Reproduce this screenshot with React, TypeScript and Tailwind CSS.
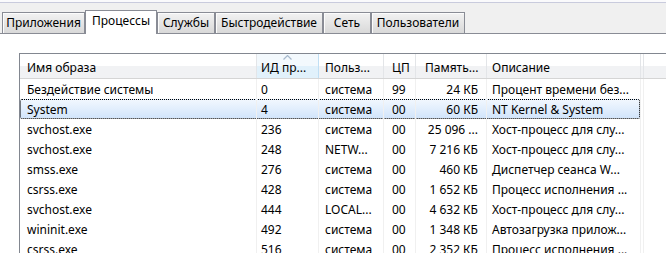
const tabs = [
  { label: "Приложения", w: "w-[83px]" },
  { label: "Процессы", w: "w-[72px]", active: true },
  { label: "Службы", w: "w-[58px]" },
  { label: "Быстродействие", w: "w-[108px]" },
  { label: "Сеть", w: "w-[48px]" },
  { label: "Пользователи", w: "w-[94px]" },
];

const rows = [
  ["Бездействие системы", "0", "система", "99", "24 КБ", "Процент времени без..."],
  ["System", "4", "система", "00", "60 КБ", "NT Kernel & System"],
  ["svchost.exe", "236", "система", "00", "25 096 ...", "Хост-процесс для слу..."],
  ["svchost.exe", "248", "NETW...", "00", "7 216 КБ", "Хост-процесс для слу..."],
  ["smss.exe", "276", "система", "00", "460 КБ", "Диспетчер сеанса  W..."],
  ["csrss.exe", "428", "система", "00", "1 652 КБ", "Процесс исполнения ..."],
  ["svchost.exe", "444", "LOCAL...", "00", "4 632 КБ", "Хост-процесс для слу..."],
  ["wininit.exe", "492", "система", "00", "1 348 КБ", "Автозагрузка прилож..."],
  ["csrss.exe", "516", "система", "00", "2 352 КБ", "Процесс исполнения ..."],
];

const cols = [
  { title: "Имя образа", w: "w-[237px]", pl: "pl-[7px]" },
  { title: "ИД пр...", w: "w-[62px]", pl: "pl-[4px]", sorted: true },
  { title: "Польз...", w: "w-[65px]", pl: "pl-[6px]" },
  { title: "ЦП", w: "w-[32px]", pl: "pl-[8px]" },
  { title: "Память...", w: "w-[71px]", pl: "pl-[9px]", right: true },
  { title: "Описание", w: "w-[154px]", pl: "pl-[5px]" },
];

export default function App() {
  return (
    <div className="w-[666px] h-[253px] overflow-hidden bg-white text-[12px] leading-none text-black font-['Noto_Sans',sans-serif]">
      <div className="h-[2px] bg-[#fafafc]" />
      <div className="h-px bg-[#c9cbdd]" />
      <div className="h-[31px] bg-[#f0f0f0] border-b border-[#898c95] flex items-end pl-[2px]">
        {tabs.map((t) =>
          t.active ? (
            <div
              key={t.label}
              className={`${t.w} h-[24px] -mb-px bg-white border border-b-0 border-[#898c95] flex justify-center pt-[4px] relative z-10`}
            >
              {t.label}
            </div>
          ) : (
            <div
              key={t.label}
              className={`${t.w} h-[21px] bg-gradient-to-b from-[#f2f2f2] to-[#d9d9d9] border border-b-0 border-[#898c95] shadow-[inset_1px_1px_0_#fcfcfc] flex justify-center pt-[4px]`}
            >
              {t.label}
            </div>
          )
        )}
      </div>

      <div className="pl-[19px] pt-[19px]">
        <div className="border-l border-t border-[#828790]">
          <div className="flex h-[25px] border-b border-[#d5d5d5] bg-gradient-to-b from-white from-50% to-[#f1f2f4] to-50%">
            {cols.map((c) => (
              <div
                key={c.title}
                className={`${c.w} shrink-0 relative flex items-center ${c.pl} pt-[4px] whitespace-nowrap overflow-hidden border-r ${
                  c.sorted
                    ? "bg-gradient-to-b from-[#f3f9fd] from-50% to-[#e1f1fb] to-50% border-x-[#c0dff4]"
                    : "border-[#e3e5e8]"
                }`}
              >
                {c.sorted && (
                  <svg className="absolute left-[26px] top-[1px]" width="9" height="5" viewBox="0 0 9 5">
                    <path d="M0.5 4.5 L4.5 0.5 L8.5 4.5" fill="none" stroke="#a7b9cc" strokeWidth="1.2" />
                  </svg>
                )}
                {c.title}
              </div>
            ))}
            <div className="w-[3px] border-r border-[#e3e5e8]" />
            <div className="flex-1" />
          </div>

          {rows.map((r, i) => (
            <div key={i} className="relative flex h-[20px]">
              {i === 1 && (
                <div className="absolute left-0 top-0 w-[620px] h-[20px] rounded-[2px] border border-dotted border-black bg-gradient-to-b from-[#f1f7fe] to-[#d2e5fb]" />
              )}
              {r.map((cell, j) => (
                <div
                  key={j}
                  className={`${cols[j].w} shrink-0 relative flex items-center pt-[1px] whitespace-nowrap overflow-hidden border-r border-[#f0f0f0] ${
                    cols[j].right ? "justify-end pr-[8px]" : cols[j].pl
                  }`}
                >
                  {cell}
                </div>
              ))}
              <div className="w-[3px] border-r border-[#f0f0f0]" />
            </div>
          ))}
        </div>
      </div>
    </div>
  );
}
